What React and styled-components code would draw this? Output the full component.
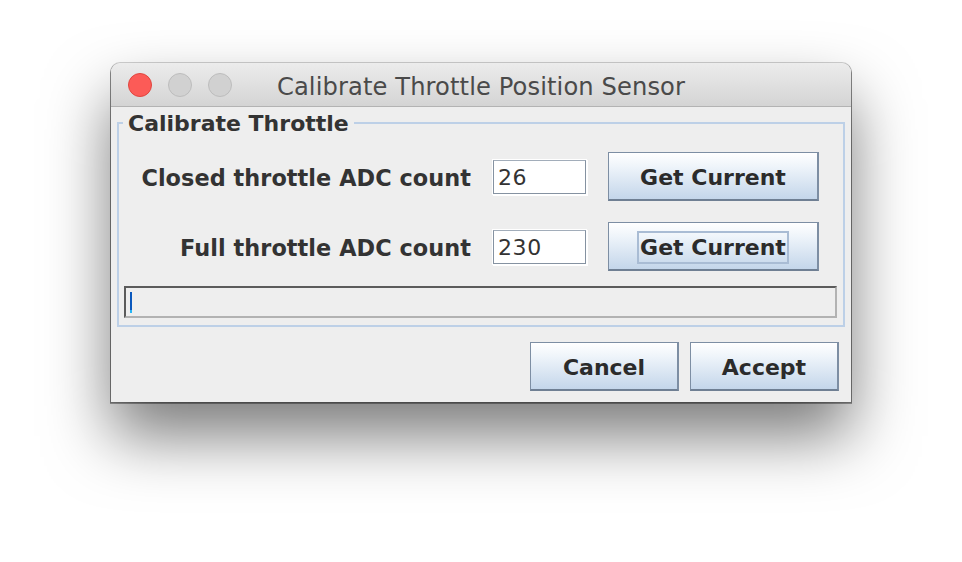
import React from "react";
import styled, { createGlobalStyle } from "styled-components";

const GlobalStyle = createGlobalStyle`
    html, body {
        margin:0;
        padding:0;
        background:#ffffff;
    }
    body {
        font-family:"DejaVu Sans", "Liberation Sans", sans-serif;
        color:#333333;
    }
`;

const Page = styled.div`
    width:962px;
    height:562px;
    box-sizing:border-box;
    padding:63px 0 0 111px;
    overflow:hidden;
`;

const Window = styled.div`
    width:740px;
    height:339px;
    display:flex;
    flex-direction:column;
    background:#eeeeee;
    border-radius:9px 9px 0 0;
    box-shadow:
        0 0 0 1px rgba(0,0,0,0.18),
        0 1px 0 1px rgba(0,0,0,0.35),
        0 34px 64px rgba(0,0,0,0.52);
`;

const TitleBar = styled.div`
    height:43px;
    flex:none;
    display:grid;
    grid-template-columns:1fr auto 1fr;
    align-items:center;
    padding-left:17px;
    background:linear-gradient(#ececec, #d4d4d4);
    border-bottom:1px solid #b3b3b3;
    border-radius:9px 9px 0 0;
`;

const Lights = styled.div`
    display:flex;
    gap:16px;
`;

const Light = styled.span`
    width:24px;
    height:24px;
    box-sizing:border-box;
    border-radius:50%;
    background:${props => props.red ? "#fc5b57" : "#d1d1d1"};
    border:1px solid ${props => props.red ? "#e0463f" : "#bdbdbd"};
`;

const Title = styled.div`
    font-size:24.2px;
    letter-spacing:0.1px;
    color:#4a4a4a;
    margin-left:-17px;
    padding-top:4px;
`;

const GroupBox = styled.div`
    position:relative;
    margin:15px 6px 0;
    border:2px solid #bdd0e7;
    padding:28px 6px 7px 5px;
`;

const Legend = styled.div`
    position:absolute;
    top:-13px;
    left:4px;
    padding:0 5px;
    background:#eeeeee;
    font-size:22px;
    font-weight:bold;
    line-height:26px;
    color:#333333;
`;

const Rows = styled.div`
    display:grid;
    grid-template-columns:1fr 93px 211px;
    column-gap:22px;
    row-gap:21px;
    align-items:center;
    padding-right:18px;
`;

const Label = styled.div`
    text-align:right;
    font-size:22.4px;
    letter-spacing:0.05px;
    font-weight:bold;
    color:#333333;
    padding-top:3px;
`;

const Field = styled.div`
    height:34px;
    box-sizing:border-box;
    background:#ffffff;
    border:1px solid #8592a1;
    border-top-color:#a2adba;
    box-shadow:0 0 0 1px #ffffff, 1px 1px 0 1px #ffffff;
    padding:2px 4px 0;
    font-size:22px;
    line-height:30px;
    letter-spacing:0.6px;
    color:#333333;
`;

const Button = styled.div`
    height:49px;
    box-sizing:border-box;
    display:flex;
    align-items:center;
    justify-content:center;
    padding-top:3px;
    background:linear-gradient(#ffffff 0%, #eef4fa 30%, #c4d6ea 100%);
    border:1px solid #7d8ea3;
    border-right-width:2px;
    border-bottom-width:2px;
    border-bottom-color:#6f7f93;
    font-size:22px;
    font-weight:bold;
    color:#2b2b2b;
`;

const Focus = styled.span`
    padding:0 1px;
    line-height:29px;
    border:2px solid #a9bcd4;
`;

const Status = styled.div`
    margin-top:15px;
    height:32px;
    box-sizing:border-box;
    border:2px solid #b2b2b2;
    border-top-color:#5b5b5b;
    border-left-color:#5b5b5b;
    display:flex;
    align-items:center;
    padding-left:4px;
`;

const Caret = styled.span`
    width:2px;
    height:21px;
    background:linear-gradient(#0a58bd 85%, #27b5f5 85%);
`;

const ButtonBar = styled.div`
    display:flex;
    justify-content:flex-end;
    gap:11px;
    padding:15px 12px 0 0;
`;

const DialogButton = styled(Button)`
    width:149px;
`;

export default function App() {
    return (
        <Page>
            <GlobalStyle />
            <Window>
                <TitleBar>
                    <Lights>
                        <Light red />
                        <Light />
                        <Light />
                    </Lights>
                    <Title>Calibrate Throttle Position Sensor</Title>
                    <span />
                </TitleBar>
                <GroupBox>
                    <Legend>Calibrate Throttle</Legend>
                    <Rows>
                        <Label>Closed throttle ADC count</Label>
                        <Field>26</Field>
                        <Button>Get Current</Button>
                        <Label>Full throttle ADC count</Label>
                        <Field>230</Field>
                        <Button><Focus>Get Current</Focus></Button>
                    </Rows>
                    <Status><Caret /></Status>
                </GroupBox>
                <ButtonBar>
                    <DialogButton>Cancel</DialogButton>
                    <DialogButton>Accept</DialogButton>
                </ButtonBar>
            </Window>
        </Page>
    );
}
